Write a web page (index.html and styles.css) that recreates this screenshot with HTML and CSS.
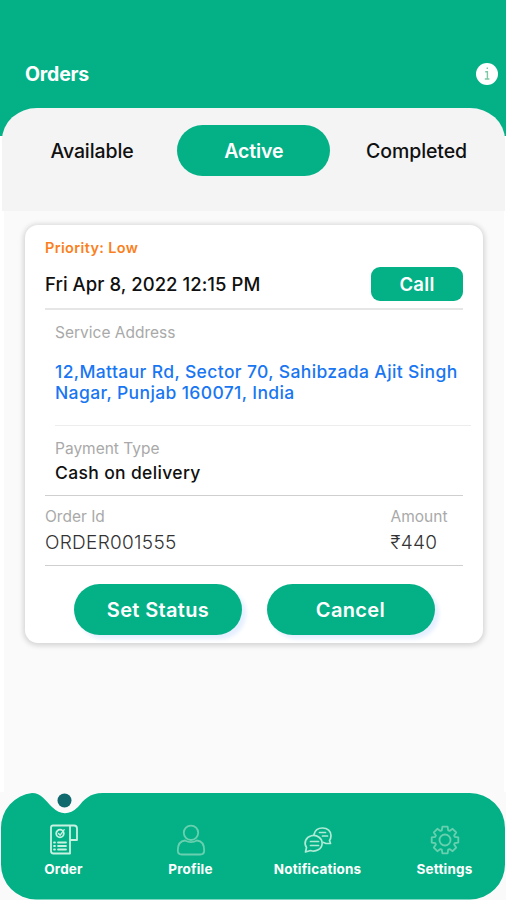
FILE: index.html
```html
<!DOCTYPE html>
<html lang="en">
<head>
<meta charset="utf-8">
<title>Orders</title>
<link rel="stylesheet" href="styles.css">
</head>
<body>
<div class="app">
  <header class="header">
    <h1 class="title">Orders</h1>
    <button class="info" aria-label="Information">
      <svg width="22" height="22" viewBox="0 0 22 22"><circle cx="11" cy="11" r="11" fill="#fff"/><path d="M10.6 5.2h1.4M9.2 8.8h2.2v7M8.8 16h4.6" fill="none" stroke="#7cc8a4" stroke-width="1.4"/></svg>
    </button>
  </header>
  <div class="tabs-wrap">
    <nav class="tabs">
      <a class="tab">Available</a>
      <a class="tab tab-active">Active</a>
      <a class="tab">Completed</a>
    </nav>
  </div>
  <main class="content">
    <article class="card">
      <p class="priority">Priority: Low</p>
      <div class="date-row">
        <time class="date">Fri Apr 8, 2022 12:15 PM</time>
        <button class="call">Call</button>
      </div>
      <section class="address">
        <p class="label">Service Address</p>
        <p class="address-text">12,Mattaur Rd, Sector 70, Sahibzada Ajit Singh<br>Nagar, Punjab 160071, India</p>
      </section>
      <section class="payment">
        <p class="label">Payment Type</p>
        <p class="cash">Cash on delivery</p>
      </section>
      <section class="summary">
        <div class="order-id">
          <p class="label">Order Id</p>
          <p class="value">ORDER001555</p>
        </div>
        <div class="amount">
          <p class="label">Amount</p>
          <p class="value">₹440</p>
        </div>
      </section>
      <div class="actions">
        <button class="action">Set Status</button>
        <button class="action">Cancel</button>
      </div>
    </article>
  </main>
  <footer class="bottom">
    <svg class="bottom-shape" width="506" height="108" viewBox="0 0 506 108">
      <path d="M32 1C41 1 46 9 52 15Q65 27.500 78 15C84 8 89 1 103 1H470A35 35 0 0 1 505 36V72A35 35 0 0 1 470 107.500H36A35 35 0 0 1 1 72V36A35 35 0 0 1 32 1Z" fill="#04b187"/>
      <circle cx="64.500" cy="8.500" r="7" fill="#10696d"/>
    </svg>
    <nav class="menu">
      <a class="item">
        <svg width="32" height="34" viewBox="0 0 32 34" fill="none" stroke="#c9f1e2" stroke-width="1.800" stroke-linecap="round" stroke-linejoin="round">
          <path d="M5 2.500H22V30.500H5.500Q3 30.500 3 28V4.500Q3 2.500 5 2.500ZM22 2.500H26Q29 2.500 29 5.500V17H22"/>
          <circle cx="12" cy="10.500" r="3.800"/><path d="M10.500 10.500l1.700 1.700 4-5.500" stroke-width="1.400"/>
          <path d="M6 19.500h1M10 19.500h8M6 23h1M10 23h8M6 26.500h1M10 26.500h8"/>
        </svg>
        <span>Order</span>
      </a>
      <a class="item">
        <svg width="32" height="34" viewBox="0 0 32 34" fill="none" stroke="#68d0af" stroke-width="1.800">
          <circle cx="16" cy="9.800" r="7.200"/><path d="M10 17.500C5 18 2.800 21.500 2.800 27.500Q2.800 31.500 6.800 31.500H25.200Q29.200 31.500 29.200 27.500C29.200 21.500 27 18 22 17.500Q19 19.200 16 19.200T10 17.500Z"/>
        </svg>
        <span>Profile</span>
      </a>
      <a class="item">
        <svg width="32" height="34" viewBox="0 0 32 34" fill="none" stroke="#b0ead6" stroke-width="1.700" stroke-linecap="round" stroke-linejoin="round">
          <path d="M12 11.500C13 7 16.500 5 20.500 5C25.500 5 29 8 29 12.500Q29 15.500 27.500 17.500L28.500 20.500H24L21.500 19.500"/>
          <path d="M4.500 24.500A8.500 7.800 0 1 1 8.500 27.500L3.500 29Z"/>
          <path d="M17.500 9.500h6M20.500 13h5M8.500 18.500h8M8.500 22.500h8"/>
        </svg>
        <span>Notifications</span>
      </a>
      <a class="item">
        <svg width="32" height="34" viewBox="0 0 32 34" fill="none" stroke="#68d0af" stroke-width="1.800" stroke-linejoin="round">
          <g transform="translate(16 17)">
            <path d="M-2.600-13.300H2.600L3.200-9.700L4.600-9.100L7.600-11.200L11.200-7.600L9.100-4.600L9.700-3.200L13.300-2.600V2.600L9.700 3.200L9.100 4.600L11.200 7.600L7.600 11.200L4.600 9.100L3.200 9.700L2.600 13.300H-2.600L-3.200 9.700L-4.600 9.100L-7.600 11.200L-11.200 7.600L-9.100 4.600L-9.700 3.200L-13.300 2.600V-2.600L-9.700-3.200L-9.100-4.600L-11.200-7.600L-7.600-11.200L-4.600-9.100L-3.200-9.700Z"/>
            <circle r="5.500"/>
          </g>
        </svg>
        <span>Settings</span>
      </a>
    </nav>
  </footer>
</div>
</body>
</html>
```
FILE: styles.css
```css
* { box-sizing: border-box; margin: 0; padding: 0; }
body { font-family: Inter, "Noto Sans", sans-serif; color: #101010; }
button { border: 0; background: none; font: inherit; }
.app { width: 506px; height: 900px; overflow: hidden; display: flex; flex-direction: column; background: #fff; }
.header { height: 108px; padding: 40px 8px 0 25px; display: flex; align-items: center; justify-content: space-between; background: #04b187; color: #fff; }
.title { font-size: 19.5px; font-weight: 700; line-height: 30px; letter-spacing: -0.2px; }
.info { width: 22px; height: 22px; }
.info svg { display: block; }
.tabs-wrap { height: 103px; background: linear-gradient(#04b187 28px, #fff 28px); padding: 0 1px 0 2px; }
.tabs { height: 103px; padding: 17px 38px 0 48.5px; display: flex; justify-content: space-between; background: #f4f4f4; border-radius: 35px 35px 0 0 / 32px 32px 0 0; }
.tab { height: 51px; line-height: 52px; font-size: 19.5px; font-weight: 500; letter-spacing: -0.1px; white-space: nowrap; }
.tab-active { width: 153px; margin-left: 8px; border-radius: 26px; text-align: center; background: #04b187; color: #fff; font-weight: 600; }
.content { flex: 1; padding: 14px 20px 0 21px; margin: 0 2px 0 4px; background: #fafafa; }
.card { width: 458px; height: 418px; padding: 12px 20px 0; border-radius: 13px; background: #fff; box-shadow: 0 1px 5px 2px rgba(0, 0, 0, .14); }
.priority { height: 22px; line-height: 22px; font-size: 14.5px; font-weight: 600; letter-spacing: .35px; color: #fb7f1c; }
.date-row { height: 51px; padding-top: 8px; display: flex; justify-content: space-between; align-items: flex-start; border-bottom: 2px solid #e6e6e6; }
.date { line-height: 35px; font-size: 18.5px; font-weight: 500; letter-spacing: .05px; }
.call { width: 92px; height: 34px; border-radius: 9px; background: #04b187; color: #fff; font-size: 18.5px; font-weight: 600; letter-spacing: .3px; line-height: 35px; }
.address { width: 416px; height: 116px; margin-left: 10px; padding-top: 12px; border-bottom: 1px solid #ededed; white-space: nowrap; }
.label { height: 22px; line-height: 22px; font-size: 15.5px; color: #a9a9a9; }
.address-text { margin-top: 17px; line-height: 21px; font-size: 17.5px; font-weight: 500; letter-spacing: .37px; color: #1976f2; }
.payment { height: 70px; padding: 12px 0 0 10px; border-bottom: 1px solid #cfcfcf; }
.cash { line-height: 26px; font-size: 17.5px; font-weight: 500; letter-spacing: .35px; }
.summary { height: 70px; padding: 10px 0 0; display: flex; justify-content: space-between; border-bottom: 1px solid #cfcfcf; }
.amount { width: 72.5px; }
.value { line-height: 29px; font-size: 19px; font-weight: 300; letter-spacing: .3px; color: #333; }
.actions { padding: 18px 29px 0; display: flex; gap: 24.5px; }
.action { width: 168px; height: 51px; flex: none; border-radius: 26px; background: #04b187; color: #fff; font-size: 20px; font-weight: 600; letter-spacing: .35px; line-height: 52px; box-shadow: 4px 4px 4px #e5efff; }
.bottom { position: relative; height: 108px; background: #fafafa; }
.bottom-shape { position: absolute; inset: 0; display: block; }
.menu { position: relative; height: 108px; display: grid; grid-template-columns: repeat(4, 127px); }
.item { padding-top: 31px; display: flex; flex-direction: column; align-items: center; color: #fff; font-size: 13.5px; font-weight: 700; letter-spacing: .2px; line-height: 25px; }
.item svg { display: block; }
```
